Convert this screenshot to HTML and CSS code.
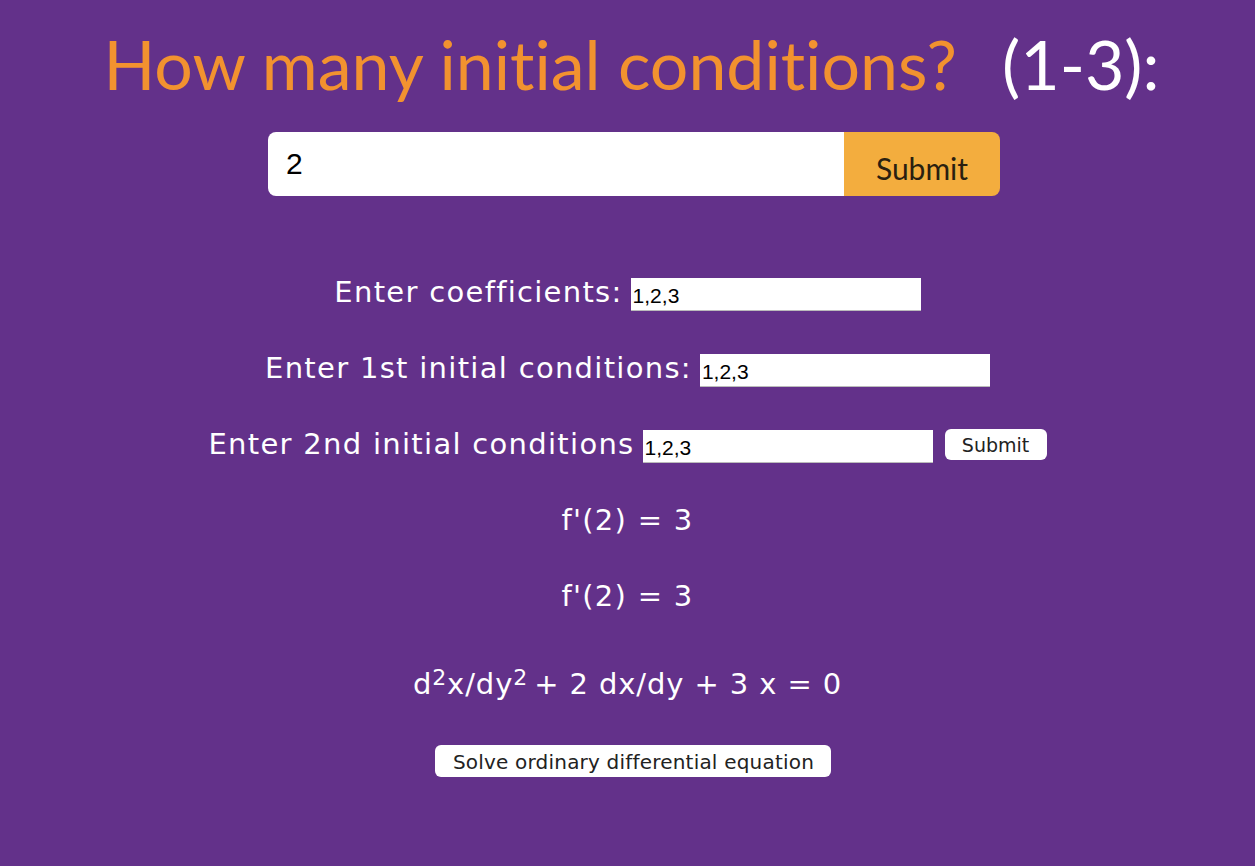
FILE: index.html
```html
<!DOCTYPE html>
<html>
<head>
<meta charset="utf-8">
<link rel="stylesheet" href="styles.css">
</head>
<body>
<div class="page">
  <h1 class="title"><span class="q">How many initial conditions?</span><span class="range">(1-3):</span></h1>
  <form class="count-form">
    <input class="count-input" type="text" value="2">
    <button class="count-submit" type="button">Submit</button>
  </form>
  <div class="rows">
    <div class="row"><label class="label">Enter coefficients:</label><input class="field" type="text" value="1,2,3"></div>
    <div class="row"><label class="label">Enter 1st initial conditions:</label><input class="field" type="text" value="1,2,3"></div>
    <div class="row"><label class="label">Enter 2nd initial conditions</label><input class="field" type="text" value="1,2,3"><button class="small-btn" type="button">Submit</button></div>
    <div class="row text">f'(2) = 3</div>
    <div class="row text">f'(2) = 3</div>
    <div class="row text eq">d<sup>2</sup>x/dy<sup class="sup-end">2</sup> + 2 dx/dy + 3 x = 0</div>
    <div class="row"><button class="solve-btn" type="button">Solve ordinary differential equation</button></div>
  </div>
</div>
</body>
</html>
```
FILE: styles.css
```css
html, body {
  margin: 0;
  padding: 0;
  background: #63318a;
  height: 100%;
}
.page {
  display: flex;
  flex-direction: column;
  align-items: center;
  padding-top: 22px;
}
.title {
  margin: 0;
  font-family: "Lato", sans-serif;
  font-weight: 400;
  font-size: 68px;
  line-height: 84px;
  display: flex;
  gap: 45px;
  padding-left: 8px;
  font-variant-ligatures: none;
}
.q { color: #f2922f; }
.range { color: #ffffff; }
.count-form {
  display: flex;
  margin-top: 26px;
  width: 732px;
  height: 64px;
  border-radius: 8px;
  overflow: hidden;
  margin-left: 13px;
}
.count-input {
  flex: 1;
  border: none;
  margin: 0;
  padding: 0 18px;
  font-family: "Liberation Sans", Arial, sans-serif;
  font-size: 30px;
  color: #000;
  background: #fff;
  outline: none;
}
.count-submit {
  width: 156px;
  border: none;
  margin: 0;
  padding: 8px 0 0;
  background: #f3ad3e;
  color: #2a1f10;
  font-family: "Lato", sans-serif;
  font-size: 30px;
}
.rows {
  display: flex;
  flex-direction: column;
  align-items: center;
  margin-top: 58px;
}
.row {
  height: 76px;
  display: flex;
  align-items: center;
  justify-content: center;
  color: #fff;
  font-family: "DejaVu Sans", sans-serif;
  font-size: 29px;
  letter-spacing: 1.3px;
}
.label {
  margin-right: 8px;
}
.field {
  width: 290px;
  height: 33px;
  box-sizing: border-box;
  border: none;
  border-bottom: 1px solid #bbb;
  padding: 4px 2px 0;
  font-family: "Liberation Sans", Arial, sans-serif;
  font-size: 21px;
  letter-spacing: 0;
  color: #000;
  background: #fff;
  margin-top: 4px;
}
.small-btn {
  margin-left: 12px;
  width: 102px;
  height: 31px;
  border: none;
  border-radius: 6px;
  background: #fff;
  color: #222;
  font-family: "DejaVu Sans", sans-serif;
  font-size: 19px;
  letter-spacing: 0;
  padding: 2px 0 0;
}
.eq {
  height: 92px;
  padding-top: 4px;
  letter-spacing: 0.9px;
}
.eq sup {
  font-size: 22px;
  line-height: 0;
  position: relative;
  top: -6px;
}
.eq .sup-end {
  margin-right: 6px;
}
.solve-btn {
  width: 396px;
  height: 32px;
  border: none;
  border-radius: 6px;
  background: #fff;
  color: #222;
  font-family: "DejaVu Sans", sans-serif;
  font-size: 20px;
  letter-spacing: 0.2px;
  padding: 2px 0 0;
  margin-top: -14px;
  margin-left: 12px;
}
```
